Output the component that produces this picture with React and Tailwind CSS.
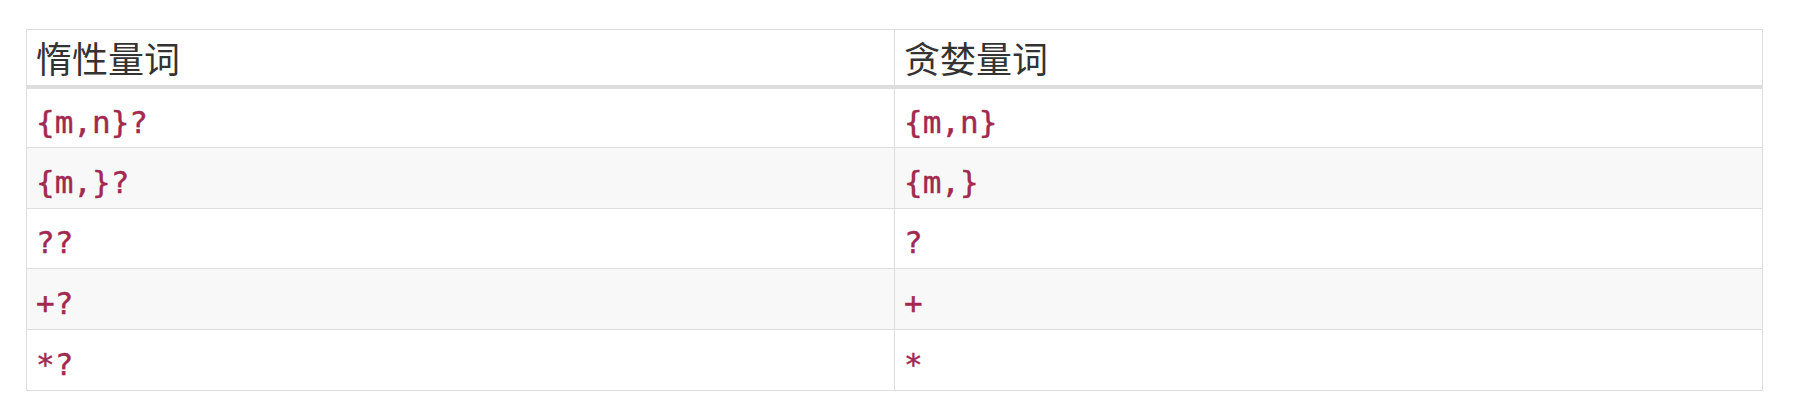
import React from 'react';

const rows = [
    ['{m,n}?', '{m,n}'],
    ['{m,}?', '{m,}'],
    ['??', '?'],
    ['+?', '+'],
    ['*?', '*'],
];

const App = () => {
    return (
        <div className="w-[1798px] h-[412px] bg-white pt-[29px] pl-[26px]">
            <table className="w-[1737px] border-collapse table-fixed">
                <thead>
                    <tr>
                        {['惰性量词', '贪婪量词'].map((h) => (
                            <th
                                key={h}
                                className="h-[57px] border border-[#dddddd] border-b-4 px-[9px] py-0 text-left align-middle font-normal text-[36px] leading-[44px] text-[#333333]"
                                style={{ fontFamily: '"Noto Sans CJK SC", sans-serif' }}
                            >
                                {h}
                            </th>
                        ))}
                    </tr>
                </thead>
                <tbody>
                    {rows.map((r, idx) => (
                        <tr key={idx} className={idx % 2 === 1 ? 'bg-[#f8f8f8]' : 'bg-white'}>
                            {r.map((c, j) => (
                                <td
                                    key={j}
                                    className="h-[60.8px] border border-[#dddddd] px-[9px] pt-[8px] pb-0 align-middle"
                                >
                                    <code className="font-['DejaVu_Sans_Mono',monospace] text-[31px] leading-[40px] text-[#a2284f] [-webkit-text-stroke:0.4px_#a2284f]">
                                        {c}
                                    </code>
                                </td>
                            ))}
                        </tr>
                    ))}
                </tbody>
            </table>
        </div>
    );
};

export default App;
